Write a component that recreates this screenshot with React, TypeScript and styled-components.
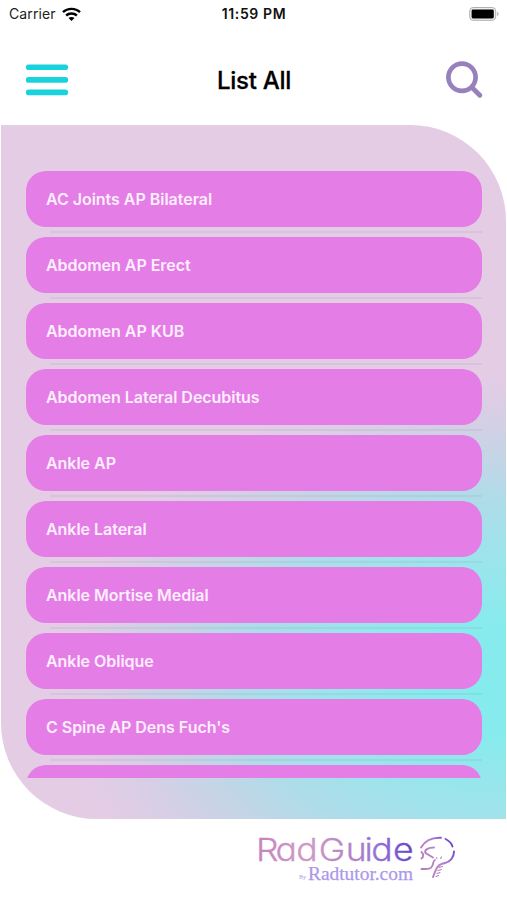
import React from "react";
import styled, { createGlobalStyle } from "styled-components";

const GlobalStyle = createGlobalStyle`
  * { box-sizing: border-box; }
  body { margin: 0; background: #fff; font-family: Inter, sans-serif; }
`;

const Screen = styled.div`
  width: 507px;
  height: 900px;
  overflow: hidden;
  display: flex;
  flex-direction: column;
  background: #fff;
`;

const StatusBar = styled.div`
  height: 28px;
  padding: 0 8px 0 9px;
  display: grid;
  grid-template-columns: 1fr auto 1fr;
  align-items: center;
  font-size: 14px;
  line-height: 28px;
  color: #222;
`;

const Carrier = styled.div`
  display: flex;
  align-items: center;
  gap: 6px;
  letter-spacing: 0.1px;
`;

const Clock = styled.div`
  font-weight: 600;
  color: #111;
  letter-spacing: 0.6px;
`;

const BatterySlot = styled.div`
  display: flex;
  justify-content: flex-end;
`;

const Header = styled.header`
  height: 97px;
  padding: 7px 24px 0 25px;
  display: grid;
  grid-template-columns: 1fr auto 1fr;
  align-items: start;
`;

const MenuButton = styled.button`
  width: 44px;
  height: 34px;
  margin-top: 28px;
  padding: 0;
  border: 0;
  background: none;
  display: flex;
`;

const SearchButton = styled(MenuButton)`
  width: 38px;
  height: 38px;
  margin-top: 26px;
  justify-self: end;
`;

const Title = styled.h1`
  margin: 31px 0 0;
  font-size: 24px;
  line-height: 30px;
  font-weight: 500;
  letter-spacing: -0.3px;
  color: #000;
  -webkit-text-stroke: 0.3px #000;
`;

const Panel = styled.main`
  height: 694px;
  margin: 0 1px;
  padding: 46px 24px 41px 25px;
  border-radius: 0 96px 0 96px;
  background: radial-gradient(
    ellipse 450px 305px at 506px 555px,
    #86ebed 0%,
    #87ebed 18%,
    #9ae5ec 38%,
    #aedce9 59%,
    #c4d5e6 73%,
    #d6cfe5 86%,
    #e4cce5 100%
  );
`;

const List = styled.ul`
  height: 607px;
  margin: 0;
  padding: 0;
  overflow: hidden;
  list-style: none;
`;

const Row = styled.li`
  height: 66px;
`;

const Pill = styled.div`
  height: 56px;
  padding: 0 20px;
  border-radius: 20px;
  background: #e47de6;
  color: #fdeefe;
  font-size: 16px;
  font-weight: 600;
  line-height: 56px;
  letter-spacing: -0.03px;
  white-space: nowrap;
`;

const Separator = styled.div`
  height: 2px;
  margin: 4px 0 4px 24px;
  background: rgba(100, 110, 130, 0.09);
`;

const Footer = styled.footer`
  flex: 1;
  padding: 6px 47px 0 250px;
  display: flex;
`;

const items = [
  "AC Joints AP Bilateral",
  "Abdomen AP Erect",
  "Abdomen AP KUB",
  "Abdomen Lateral Decubitus",
  "Ankle AP",
  "Ankle Lateral",
  "Ankle Mortise Medial",
  "Ankle Oblique",
  "C Spine AP Dens Fuch's",
  "",
];

const WifiIcon = () => (
  <svg width="19" height="15" viewBox="0 0 19 15" fill="none" stroke="#000" strokeWidth="2.4">
    <path d="M1 5.2C5.6.7 13.4.7 18 5.2" />
    <path d="M4.1 8.5c2.9-2.7 7.9-2.7 10.8 0" />
    <path d="M6.5 11c1.5-1.4 4.5-1.4 6 0L9.5 14z" fill="#000" stroke="none" />
  </svg>
);

const BatteryIcon = () => (
  <svg width="30" height="14" viewBox="0 0 30 14">
    <rect x=".7" y=".5" width="26" height="12.8" rx="3.4" fill="#eee" stroke="#b0b0b0" />
    <rect x="2.6" y="2.6" width="22.2" height="8.8" rx="1.4" />
    <path d="M28.2 5c1.8.5 1.8 3.5 0 4z" fill="#aaa" />
  </svg>
);

const MenuIcon = () => (
  <svg width="44" height="34" viewBox="0 0 44 34" stroke="#18d3dc" strokeWidth="5.6" strokeLinecap="round">
    <path d="M3.7 4.2h36.6M3.7 16.9h36.6M3.7 29.4h36.6" />
  </svg>
);

const SearchIcon = () => (
  <svg width="38" height="38" viewBox="0 0 38 38" fill="none" stroke="#9880bd" strokeLinecap="round">
    <circle cx="17" cy="16.2" r="13.6" strokeWidth="4.7" />
    <path d="M27 26.5l7.8 7.8" strokeWidth="4.8" />
  </svg>
);

const Wordmark = styled.text`
  font-family: Inter, sans-serif;
  font-size: 31.5px;
  font-weight: 300;
  font-feature-settings: "cv11" 1;
`;

const Tagline = styled.text<{ $size: number }>`
  font-family: "Liberation Serif", serif;
  font-size: ${(p) => p.$size}px;
  fill: #ac98ec;
`;

const Logo = () => (
  <svg width="210" height="75" viewBox="250 825 210 75">
    <defs>
      <linearGradient id="word" gradientUnits="userSpaceOnUse" x1="2" y1="0" x2="139" y2="0">
        <stop offset="0" stopColor="#c783bb" />
        <stop offset=".3" stopColor="#d09ac8" />
        <stop offset=".6" stopColor="#b583c6" />
        <stop offset=".78" stopColor="#9670d8" />
        <stop offset="1" stopColor="#6743c8" />
      </linearGradient>
      <linearGradient id="skull" gradientUnits="userSpaceOnUse" x1="422" y1="866" x2="455" y2="848">
        <stop offset="0" stopColor="#b678bb" />
        <stop offset=".5" stopColor="#b985ce" />
        <stop offset="1" stopColor="#6940d0" />
      </linearGradient>
    </defs>
    <Wordmark
      transform="translate(256 861) scale(1.13 1)"
      x="0.1 17.3 35.6 55.5 79.4 96 102 121.3"
      fill="url(#word)"
      stroke="url(#word)"
      strokeWidth=".3"
    >
      RadGuide
    </Wordmark>
    <Tagline x="299" y="879" $size={6}>By</Tagline>
    <Tagline x="308" y="879.5" textLength="105" lengthAdjust="spacingAndGlyphs" $size={18} stroke="#ac98ec" strokeWidth=".25">
      Radtutor.com
    </Tagline>
    <g fill="none" stroke="url(#skull)" strokeWidth="1.9" strokeLinecap="round">
      <path d="M421 847.5c4-7 11-10 20-9.7" />
      <path d="M445.5 839c4 2 6 4 7 7.5" />
      <path d="M454 851.5c0 6-4 10.5-9 11.5-8 1.5-8.5 5-12 14" />
      <path d="M434 847.5c-6 0-10 2.5-8.5 5.5l7.5 4.5" />
      <path d="M421.5 852c2.5 2 2 5 0 6.5" />
      <path d="M435 860c-2 1-1.5 3-2.5 5.5-1.5 4-5 3.5-11 3.5" />
      <path d="M436.5 857.5l.5 1M441.5 857l-1 1.5M439 867.5l3.5-1M438 870.5l3.5-1M437 873.5l3-1M436 876.5l2.5-1" strokeWidth="1.1" />
    </g>
  </svg>
);

export default function App() {
  return (
    <Screen>
      <GlobalStyle />
      <StatusBar>
        <Carrier>Carrier <WifiIcon /></Carrier>
        <Clock>11:59 PM</Clock>
        <BatterySlot><BatteryIcon /></BatterySlot>
      </StatusBar>
      <Header>
        <MenuButton aria-label="Menu"><MenuIcon /></MenuButton>
        <Title>List All</Title>
        <SearchButton aria-label="Search"><SearchIcon /></SearchButton>
      </Header>
      <Panel>
        <List>
          {items.map((name, i) => (
            <Row key={i}>
              <Pill>{name}</Pill>
              <Separator />
            </Row>
          ))}
        </List>
      </Panel>
      <Footer><Logo /></Footer>
    </Screen>
  );
}
